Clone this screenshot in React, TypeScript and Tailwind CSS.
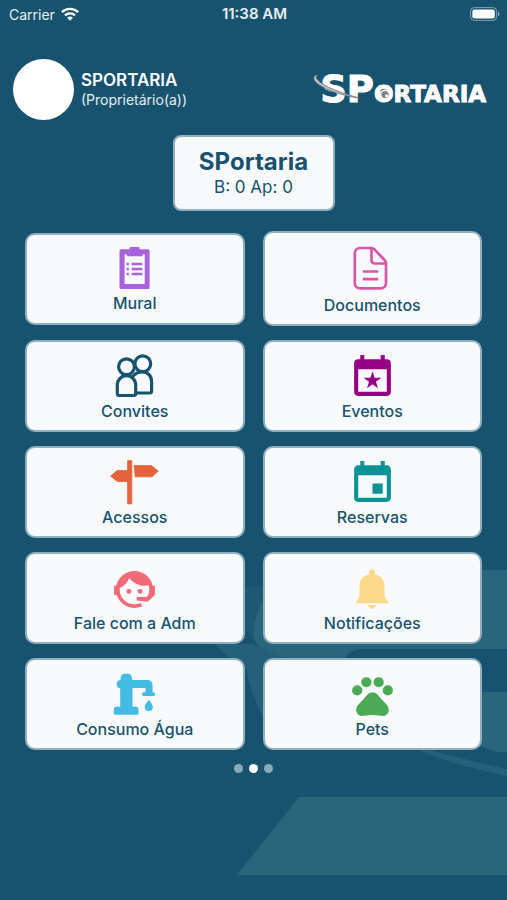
import type { ReactNode } from 'react'
import { MdEvent, MdPets } from 'react-icons/md'

type MenuItem = { label: string; color: string; icon: ReactNode; tall?: boolean }

const iconClass = 'size-[49px] shrink-0'

function ClipboardIcon() {
  return (
    <svg viewBox="0 0 49 49" className={iconClass} fill="currentColor" aria-hidden="true">
      <path
        fillRule="evenodd"
        d="M19.5 3a1 1 0 0 1 1-1h8a1 1 0 0 1 1 1v1.3H38a1.6 1.6 0 0 1 1.6 1.6v36.5A1.6 1.6 0 0 1 38 44H11.1a1.6 1.6 0 0 1-1.6-1.6V5.9a1.6 1.6 0 0 1 1.6-1.6h8.4zM14.6 9.3V39h20.1V9.3h-1.9v1a1 1 0 0 1-1 1H17.8a1 1 0 0 1-1-1v-1z"
      />
      <path d="M16.5 17.8h2.3v2.4h-2.3zM21.7 17.8h10.6v2.4H21.7zM16.5 22.8h2.3v2.4h-2.3zM21.7 22.8h10.6v2.4H21.7zM16.5 27.8h2.3v2.4h-2.3zM21.7 27.8h10.6v2.4H21.7z" />
    </svg>
  )
}

function DocumentIcon() {
  return (
    <svg viewBox="0 0 49 52" className="h-[52px] w-[49px] shrink-0" fill="none" stroke="currentColor" strokeWidth="2.7" strokeLinejoin="round" aria-hidden="true">
      <path d="M12 4h11.6a3.6 3.6 0 0 1 2.6 1.1l10.600 11.200a4 4 0 0 1 1.200 2.800V39a5.300 5.300 0 0 1-5.300 5.300H12A5.300 5.300 0 0 1 6.800 39V9.300A5.300 5.300 0 0 1 12 4z" />
      <path d="M23.500 4.300v12.200a3 3 0 0 0 3 3h11.200" />
      <path d="M14.800 27.500h15.400M14.800 35.200h15.400" />
    </svg>
  )
}

function PeopleIcon() {
  return (
    <svg viewBox="0 0 49 49" className={iconClass} fill="none" stroke="currentColor" strokeWidth="3.2" strokeLinejoin="round" strokeLinecap="round" aria-hidden="true">
      <circle cx="32.8" cy="10.7" r="7.900" />
      <circle cx="16.5" cy="13.7" r="7.900" />
      <path d="M7.300 40.500V31.800a9.200 9.200 0 0 1 18.400 0v8.700a2 2 0 0 1-2 2H9.300a2 2 0 0 1-2-2z" />
      <path d="M23.300 22.800c2.300-2.600 5.300-4 9-4 5.500 0 9.300 4.300 9.300 9.700v9.500a2 2 0 0 1-2 2H26" />
    </svg>
  )
}

function EventStarIcon() {
  return (
    <svg viewBox="0 0 24 24" className={iconClass} fill="currentColor" aria-hidden="true">
      <path d="M19 19H5V8h14m0-5h-1V1h-2v2H8V1H6v2H5a2 2 0 0 0-2 2v14a2 2 0 0 0 2 2h14a2 2 0 0 0 2-2V5a2 2 0 0 0-2-2z" />
      <path d="M12 9l1.05 3.100 3.350.05-2.700 1.950 1 3.150L12 15.350l-2.700 1.900 1-3.150-2.700-1.950 3.350-.05z" />
    </svg>
  )
}

function SignpostIcon() {
  return (
    <svg viewBox="0 0 49 49" className={iconClass} fill="currentColor" stroke="currentColor" strokeWidth=".8" strokeLinejoin="round" aria-hidden="true">
      <path d="M17.600 1.600h4.200v43.300h-4.200z" />
      <path d="M24.200 6.600h17.400l6.700 5.600-6.300 5.600H25.200z" />
      <path d="M17.600 11.600H7l-6.400 5.600 6.800 5.300h10.200z" />
    </svg>
  )
}

function AgentIcon() {
  return (
    <svg viewBox="0 0 24 24" className={iconClass} fill="currentColor" aria-hidden="true">
      <path d="M18.72,14.76C19.07,13.91 19.26,13 19.26,12C19.26,11.28 19.15,10.59 18.96,9.95C18.31,10.1 17.63,10.18 16.92,10.18C13.86,10.18 11.15,8.67 9.5,6.34C8.61,8.5 6.91,10.26 4.77,11.22C4.73,11.47 4.73,11.74 4.73,12A7.27,7.27 0 0,0 12,19.27C13.05,19.27 14.06,19.04 14.97,18.63C15.54,19.72 15.8,20.26 15.78,20.26C14.14,20.81 12.87,21.08 12,21.08C9.58,21.08 7.27,20.13 5.57,18.42C4.53,17.38 3.76,16.11 3.33,14.73H2V10.18H3.09C3.93,6.04 7.6,2.92 12,2.92C14.4,2.92 16.71,3.87 18.42,5.58C19.69,6.84 20.54,8.45 20.89,10.18H22V14.73H21.94L18.38,18L13.08,17.4V15.73H17.91L18.72,14.76M9.27,11.77A1.14,1.14 0 1,1 9.27,14.04A1.14,1.14 0 1,1 9.27,11.77M14.72,11.77A1.14,1.14 0 1,1 14.72,14.04A1.14,1.14 0 1,1 14.72,11.77Z" />
    </svg>
  )
}

function BellIcon() {
  return (
    <svg viewBox="0 0 49 49" className={iconClass} fill="currentColor" aria-hidden="true">
      <path d="M24 4.300a3 3 0 0 1 3 3v2c5.900 1.300 9.500 5.700 9.500 11.700v7c0 4.500 1.200 6.500 4.300 9.200v1H7.500v-1c3-2.700 4-4.700 4-9.200v-7C11.500 15 15.100 10.600 21 9.300v-2a3 3 0 0 1 3-3z" />
      <path d="M19.800 40h8.200c0 1.700-1.700 2.200-2.600 3.200-.8 1-2.200 1-3 0-.9-1-2.600-1.500-2.600-3.200z" />
    </svg>
  )
}

function FaucetIcon() {
  return (
    <svg viewBox="0 0 49 49" className={iconClass} fill="currentColor" aria-hidden="true">
      <path d="M10.500 9c0-4 1.500-6.300 4-6.300h3.700c2.500 0 4 2.300 4 6.300h15.600a4.700 4.700 0 0 1 4.700 4.700v7.600h.8a1.800 1.800 0 0 1 0 3.700H33.900a1.800 1.800 0 0 1 0-3.700h1.600V17h-13v18.700h3.300a2.700 2.700 0 0 1 2.700 2.700v4.300a1 1 0 0 1-1 1H4.800a1 1 0 0 1-1-1v-4.300a2.700 2.700 0 0 1 2.700-2.700h3.700V17.300a4.200 4.200 0 0 1 0-8.300z" />
      <path d="M38.800 28.700c2 2.700 4 4.800 4 7.300a4 4 0 0 1-8 0c0-2.500 2-4.600 4-7.300z" />
    </svg>
  )
}

const menuItems: MenuItem[] = [
  { label: 'Mural', color: 'text-[#a862dc]', icon: <ClipboardIcon /> },
  { label: 'Documentos', color: 'text-[#d957a8]', icon: <DocumentIcon />, tall: true },
  { label: 'Convites', color: 'text-[#17536e]', icon: <PeopleIcon /> },
  { label: 'Eventos', color: 'text-[#950087]', icon: <EventStarIcon /> },
  { label: 'Acessos', color: 'text-[#e5633c]', icon: <SignpostIcon /> },
  { label: 'Reservas', color: 'text-[#0b9295]', icon: <MdEvent className={iconClass} /> },
  { label: 'Fale com a Adm', color: 'text-[#f06a78]', icon: <AgentIcon /> },
  { label: 'Notificações', color: 'text-[#fcd98a]', icon: <BellIcon /> },
  { label: 'Consumo Água', color: 'text-[#43bbe3]', icon: <FaucetIcon /> },
  { label: 'Pets', color: 'text-[#4caa55]', icon: <MdPets className={iconClass} /> },
]

function StatusBar() {
  return (
    <div className="grid h-7 grid-cols-3 items-center pr-[7px] pl-[9px] text-white/90">
      <div className="flex items-center gap-[6px]">
        <span className="text-[14px]">Carrier</span>
        <svg viewBox="0 0 18 14" className="h-[14px] w-[18px]" fill="none" stroke="white" strokeWidth="2.4" aria-hidden="true">
          <path d="M.9 5.200a11.600 11.600 0 0 1 16.200 0M4 8.400a7.200 7.200 0 0 1 10 0" />
          <path d="M9 13.800l-2.900-3a4.200 4.200 0 0 1 5.800 0z" fill="white" stroke="none" />
        </svg>
      </div>
      <span className="text-center text-[15px] font-semibold whitespace-nowrap">11:38 AM</span>
      <svg viewBox="0 0 30 14" className="h-[14px] w-[30px] justify-self-end" aria-hidden="true">
        <rect x=".6" y=".6" width="26" height="12.8" rx="3.6" fill="none" stroke="white" strokeOpacity=".45" />
        <rect x="2.4" y="2.4" width="22.4" height="9.2" rx="2" fill="white" />
        <path d="M28 4.800c2 .7 2 3.700 0 4.400z" fill="white" fillOpacity=".5" />
      </svg>
    </div>
  )
}

function Logo() {
  return (
    <div className="relative flex items-baseline font-['DejaVu_Sans',sans-serif] leading-none font-bold text-white [-webkit-text-stroke:1px_white]">
      <span className="text-[37px]">SP</span>
      <span className="text-[23px]">ORTARIA</span>
      {/* órbita sobre o S e olho dentro do O */}
      <svg viewBox="0 0 80 36" className="absolute top-0 -left-2 h-9 w-20" fill="none" aria-hidden="true">
        <path d="M6 4C0 4 0 10 9 15c10 6 24 10 38 12C33 23 18 18 9 12 4 8 3 6 6 4z" fill="#b9bfc5" stroke="#5d6870" strokeWidth=".7" />
        <circle cx="73" cy="23.500" r="5" fill="white" />
        <circle cx="73" cy="23.500" r="3.600" fill="#7d8286" />
        <circle cx="74.500" cy="25" r="1.400" fill="white" />
      </svg>
    </div>
  )
}

function Watermark() {
  return (
    <svg viewBox="0 0 507 900" preserveAspectRatio="xMaxYMin slice" className="pointer-events-none absolute inset-0 size-full" aria-hidden="true">
      <path d="M213 586h50v24l-12 28-6-10c-14-10-26-24-32-42z" fill="#1d5973" />
      <g fill="#2b657c">
        <path d="M507 570H310c-30 0-55 28-57 66 3 12 14 18 32 22h60c4-6 10-9 20-9h142z" />
        <path d="M330 692h177v60c-8 1-16-1-24-5H350z" />
        <path d="M299 797h208v78H237z" />
      </g>
      <g fill="#255f78">
        <path d="M215 644h38l32 14 20 12h-42v46c-8-14-14-30-17-48-12-5-22-14-31-24z" />
        <path d="M413 744l24 8c24 6 46 12 70 17v7c-30-6-60-14-84-24z" />
      </g>
    </svg>
  )
}

export default function App() {
  return (
    <div className="relative min-h-screen bg-[#17536e] font-[Inter,sans-serif]">
      <Watermark />
      <div className="relative">
        <StatusBar />

        <header className="flex items-center justify-between pt-[31px] pr-[21px] pl-[13px]">
          <div className="flex items-center gap-[7px]">
            <div className="size-[61px] rounded-full bg-white" />
            <div className="text-white">
              <p className="text-[17px] leading-5 font-semibold">SPORTARIA</p>
              <p className="text-[14px] leading-5 text-white/90">(Proprietário(a))</p>
            </div>
          </div>
          <Logo />
        </header>

        <main className="px-[25px] pt-[15px]">
          <section className="mx-auto w-[162px] rounded-lg border-2 border-[#8fb0bf] bg-[#f8f9fb] py-[11px] text-center text-[#17536e]">
            <h1 className="text-[24px] leading-7 font-bold">SPortaria</h1>
            <p className="text-[17px] leading-[22px]">B: 0 Ap: 0</p>
          </section>

          <nav className="mt-5 grid grid-cols-2 items-center gap-x-[18px] gap-y-[14px]">
            {menuItems.map(({ label, color, icon, tall }) => (
              <button
                key={label}
                type="button"
                className={`flex flex-col items-center justify-center rounded-[10px] border-2 border-[#8fb0bf] bg-[#f8f9fb] ${tall ? 'min-h-[95px]' : 'min-h-[92px]'}`}
              >
                <span className={color}>{icon}</span>
                <span className="text-[16px] leading-[18px] font-medium text-[#17536e]">{label}</span>
              </button>
            ))}
          </nav>

          <div className="mt-[14px] flex justify-center gap-[6px]">
            <span className="size-[9px] rounded-full bg-[#8baab8]" />
            <span className="size-[9px] rounded-full bg-white" />
            <span className="size-[9px] rounded-full bg-[#8baab8]" />
          </div>
        </main>
      </div>
    </div>
  )
}
